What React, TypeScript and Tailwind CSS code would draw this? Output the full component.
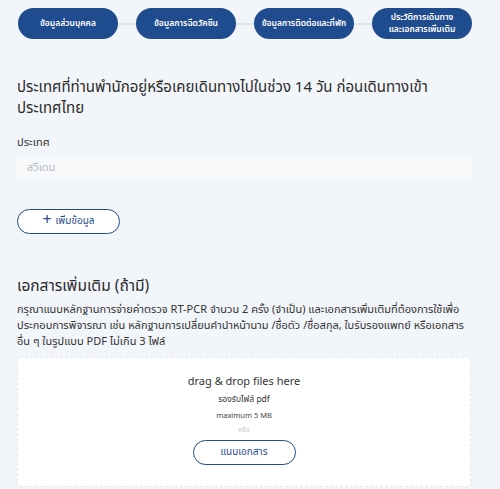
const steps = [
  ["ข้อมูลส่วนบุคคล"],
  ["ข้อมูลการฉีดวัคซีน"],
  ["ข้อมูลการติดต่อและที่พัก"],
  ["ประวัติการเดินทาง", "และเอกสารเพิ่มเติม"],
];

const Stepper = () => (
  <div className="flex items-center pl-[18px] pt-2">
    {steps.map((lines, i) => (
      <div key={i} className="flex items-center">
        {i > 0 && <div className="w-[18px] h-[2px] bg-[#e1e4e9]" />}
        <div className="w-[100px] h-[31px] rounded-full bg-[#1f4b8f] text-white flex flex-col items-center justify-center text-[8.5px] font-semibold leading-[12px] whitespace-nowrap">
          {lines.map((l) => (
            <span key={l}>{l}</span>
          ))}
        </div>
      </div>
    ))}
  </div>
);

export default function App() {
  return (
    <div
      className="w-[500px] h-[489px] overflow-hidden bg-[#f2f5f9] text-[#333]"
      style={{ fontFamily: '"Noto Sans Thai", "Noto Sans", "DejaVu Sans", sans-serif' }}
    >
      <Stepper />

      <div className="w-[454px] ml-[17px]">
        <h2 className="mt-[38px] text-[15px] leading-[21px] text-[#2b2b2b]">
          ประเทศที่ท่านพำนักอยู่หรือเคยเดินทางไปในช่วง 14 วัน ก่อนเดินทางเข้า
          <br />
          ประเทศไทย
        </h2>

        <div className="mt-[16px] text-[11px] text-[#333]">ประเทศ</div>
        <div className="mt-[5px] h-[23px] rounded-[3px] bg-[#f7f9fb] flex items-center px-[10px] text-[11px] text-[#b5b9bf]">
          สวีเดน
        </div>

        <button className="mt-[29px] w-[103px] h-[25px] rounded-full border-[1.5px] border-[#1f4b8f] bg-white flex items-center justify-center gap-[4px] text-[10px] text-[#1f4b8f]">
          <span className="text-[16px] leading-none -mt-[2px]">+</span>
          <span>เพิ่มข้อมูล</span>
        </button>

        <h2 className="mt-[43px] text-[15.5px] leading-[20px] text-[#2b2b2b]">เอกสารเพิ่มเติม (ถ้ามี)</h2>
        <p className="mt-[5px] text-[11px] leading-[16px] text-[#333]">
          กรุณาแนบหลักฐานการจ่ายค่าตรวจ RT-PCR จำนวน 2 ครั้ง (จำเป็น) และเอกสารเพิ่มเติมที่ต้องการใช้เพื่อ
          ประกอบการพิจารณา เช่น หลักฐานการเปลี่ยนคำนำหน้านาม /ชื่อตัว /ชื่อสกุล, ใบรับรองแพทย์ หรือเอกสาร
          อื่น ๆ ในรูปแบบ PDF ไม่เกิน 3 ไฟล์
        </p>

        <div className="mt-[7px] h-[130px] bg-white border border-dashed border-[#e3e6ea] rounded-[3px] flex flex-col items-center pt-[17px]">
          <div className="text-[11px] leading-[14px] text-[#333]">drag &amp; drop files here</div>
          <div className="mt-[5px] text-[8.5px] leading-[12px] text-[#333]">รองรับไฟล์ pdf</div>
          <div className="mt-[4px] text-[7.5px] leading-[11px] text-[#444]">maximum 5 MB</div>
          <div className="mt-[4px] text-[7px] leading-[10px] text-[#c4c7cc]">หรือ</div>
          <button className="mt-[5px] w-[103px] h-[25px] rounded-full border-[1.5px] border-[#1f4b8f] bg-white text-[10px] text-[#1f4b8f]">
            แนบเอกสาร
          </button>
        </div>
      </div>
    </div>
  );
}
